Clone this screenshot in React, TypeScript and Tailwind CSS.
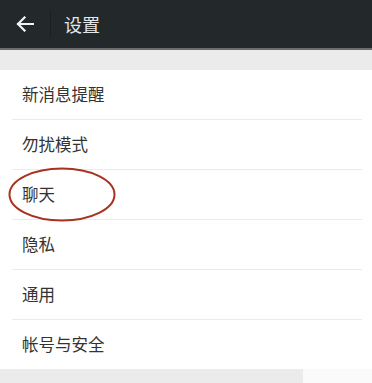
import React from "react";

const items = ["新消息提醒", "勿扰模式", "聊天", "隐私", "通用", "帐号与安全"];

export default function App() {
  return (
    <div
      className="relative w-[372px] h-[383px] overflow-hidden bg-white"
      style={{ fontFamily: '"Noto Sans CJK SC", "Noto Sans", sans-serif' }}
    >
      <div className="h-[48px] bg-[#23292b] flex items-center">
        <div className="w-[50px] flex items-center justify-center">
          <svg width="18" height="16" viewBox="0 0 18 16" fill="none">
            <path d="M17 8H2M8.5 1.5L2 8l6.5 6.5" stroke="#f2f2f2" strokeWidth="2.2" strokeLinecap="square" />
          </svg>
        </div>
        <div className="w-px h-[28px] bg-[#1a1f21]" />
        <div className="ml-[13px] text-[18px] text-[#e6e6e6] leading-none">设置</div>
      </div>
      <div className="h-[2px] bg-[#6b6d6e]" />
      <div className="h-[20px] bg-[#ebebeb]" />
      <div className="flex flex-col">
        {items.map((t, i) => (
          <div key={t} className="flex flex-col">
            <div className="h-[49px] flex items-center pl-[22px] text-[16.5px] text-[#333333]">{t}</div>
            {i < items.length - 1 && <div className="h-px ml-[12px] mr-[10px] bg-[#ebebeb]" />}
          </div>
        ))}
      </div>
      <div className="flex h-[20px]">
        <div className="w-[303px] bg-[#ebebeb]" />
        <div className="flex-1 bg-[#fafafa]" />
      </div>
      <svg className="absolute left-[8px] top-[167px]" width="108" height="55" viewBox="0 0 108 55">
        <ellipse cx="54" cy="27.5" rx="52.5" ry="26" fill="none" stroke="#a8321f" strokeWidth="2" />
      </svg>
    </div>
  );
}
